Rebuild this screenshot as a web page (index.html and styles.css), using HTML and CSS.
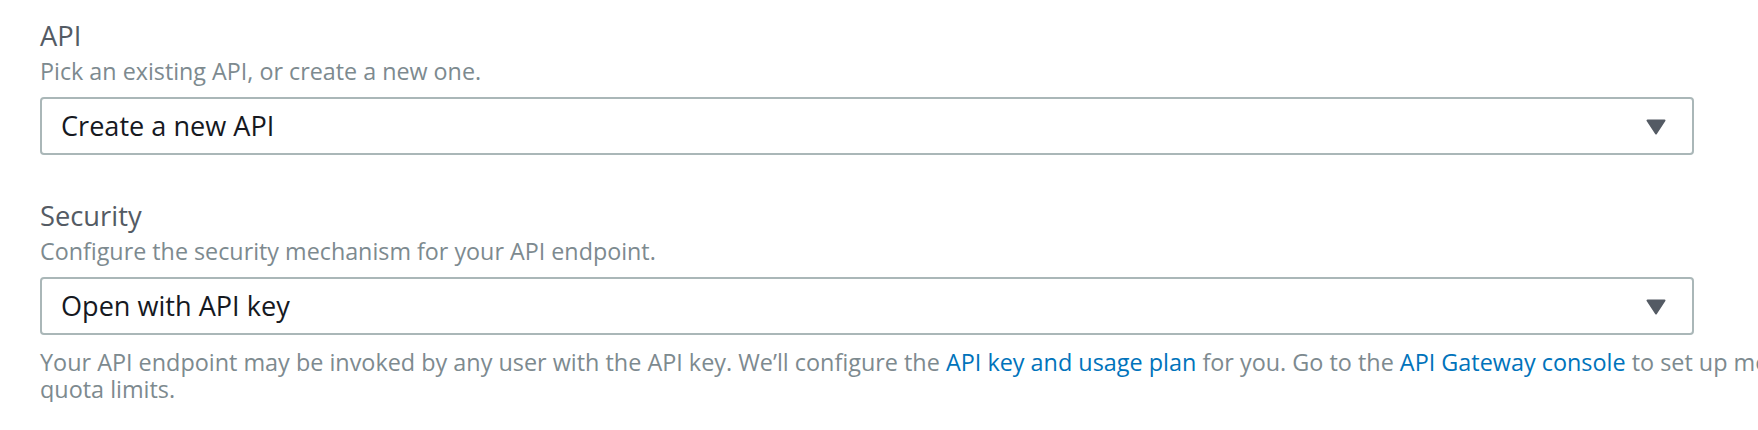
FILE: index.html
```html
<!DOCTYPE html>
<html lang="en">
<head>
<meta charset="utf-8">
<title>API settings</title>
<link rel="stylesheet" href="styles.css">
</head>
<body>
<form class="form">
  <div class="field">
    <label class="label">API</label>
    <div class="description">Pick an existing API, or create a new one.</div>
    <div class="select">
      <span class="select-value">Create a new API</span>
      <svg class="caret" width="20" height="16" viewBox="0 0 20 16" aria-hidden="true"><path d="M1.5 1.5 H18.5 L10 14.5 Z" fill="#545b64" stroke="#545b64" stroke-width="2" stroke-linejoin="round"/></svg>
    </div>
  </div>
  <div class="field">
    <label class="label">Security</label>
    <div class="description">Configure the security mechanism for your API endpoint.</div>
    <div class="select">
      <span class="select-value">Open with API key</span>
      <svg class="caret" width="20" height="16" viewBox="0 0 20 16" aria-hidden="true"><path d="M1.5 1.5 H18.5 L10 14.5 Z" fill="#545b64" stroke="#545b64" stroke-width="2" stroke-linejoin="round"/></svg>
    </div>
    <p class="help">Your API endpoint may be invoked by any user with the API key. We’ll configure the <a class="link" href="#">API key and usage plan</a> for you. Go to the <a class="link" href="#">API Gateway console</a> to set up more throttling and<br>quota limits.</p>
  </div>
</form>
</body>
</html>
```
FILE: styles.css
```css
html {
  overflow: hidden;
}
body {
  margin: 0;
  background: #ffffff;
  font-family: "Open Sans", "Noto Sans", sans-serif;
}
.form {
  padding: 19px 0 0 40px;
  width: 1654px;
}
.field {
  display: flex;
  flex-direction: column;
}
.field + .field {
  margin-top: 44px;
}
.label {
  font-size: 27.3px;
  line-height: 34px;
  color: #545b64;
}
.description {
  margin-top: 2px;
  font-size: 23.3px;
  line-height: 32px;
  color: #7d8a8f;
}
.select {
  margin-top: 10px;
  height: 58px;
  box-sizing: border-box;
  border: 2px solid #aab7b8;
  border-radius: 4px;
  display: flex;
  align-items: center;
  justify-content: space-between;
  padding: 0 26px 0 19px;
}
.select-value {
  font-size: 27.1px;
  line-height: 54px;
  color: #16191f;
}
.caret {
  display: block;
  margin-top: 1px;
}
.help {
  margin: 14px 0 0;
  font-size: 23.4px;
  line-height: 26.7px;
  color: #7d8a8f;
  white-space: nowrap;
}
.link {
  color: #0073bb;
  text-decoration: none;
}
```
